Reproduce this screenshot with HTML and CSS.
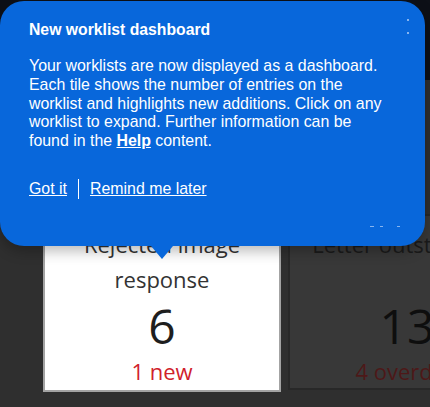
FILE: index.html
```html
<!DOCTYPE html>
<html lang="en">
<head>
<meta charset="utf-8">
<title>Worklist dashboard</title>
<link rel="stylesheet" href="styles.css">
</head>
<body>
<header class="topbar"></header>
<main class="dash">
  <div class="tiles">
    <section class="tile tile-active">
      <h2 class="tile-title">Rejected image response</h2>
      <div class="tile-count">6</div>
      <div class="tile-note">1 new</div>
    </section>
    <section class="tile tile-dim">
      <h2 class="tile-title">Letter outstanding</h2>
      <div class="tile-count">13</div>
      <div class="tile-note">4 overdue</div>
    </section>
  </div>
</main>
<div class="popup" role="dialog" aria-labelledby="popup-title">
  <h1 class="popup-title" id="popup-title">New worklist dashboard</h1>
  <p class="popup-text">Your worklists are now displayed as a dashboard. Each tile shows the number of entries on the worklist and highlights new additions. Click on any worklist to expand. Further information can be found in the <a class="help-link" href="#">Help</a> content.</p>
  <div class="popup-actions">
    <a class="action" href="#">Got it</a>
    <span class="divider"></span>
    <a class="action" href="#">Remind me later</a>
  </div>
  <span class="dot dot-a"></span>
  <span class="dot dot-b"></span>
  <span class="dot dot-c"></span>
  <span class="dot dot-d"></span>
  <span class="dot dot-e"></span>
</div>
</body>
</html>
```
FILE: styles.css
```css
html, body {
  margin: 0;
  padding: 0;
}

body {
  width: 430px;
  height: 407px;
  overflow: hidden;
  background: #2f2f2f;
  position: relative;
  font-family: "Open Sans", "Noto Sans", sans-serif;
}

.topbar {
  height: 80px;
  background: #0d1017;
}

.dash {
  padding: 134px 0 0 43px;
}

.tiles {
  display: flex;
  gap: 7px;
}

.tile {
  flex: 0 0 238px;
  box-sizing: border-box;
  height: 178px;
  padding-top: 11px;
  display: flex;
  flex-direction: column;
  align-items: center;
  text-align: center;
}

.tile-active {
  background: #ffffff;
  border: 2px solid #a3a3a3;
  color: #333333;
}

.tile-dim {
  background: #383838;
  border: 2px solid #282828;
  color: #1a1a1a;
  height: 176px;
}

.tile-title {
  margin: 0;
  font-size: 22px;
  font-weight: 400;
  line-height: 35px;
  min-height: 70px;
  padding: 0 6px;
}

.tile-count {
  margin-top: 0.5px;
  font-size: 48px;
  line-height: 56px;
  color: #1e1e1e;
}

.tile-dim .tile-count {
  color: #0e0e0e;
}

.tile-note {
  margin-top: 1px;
  font-size: 22px;
  line-height: 32px;
  color: #d0212b;
}

.tile-dim .tile-note {
  color: #4d1818;
}

.popup {
  position: absolute;
  left: 0;
  top: 1px;
  width: 425px;
  height: 245px;
  box-sizing: border-box;
  padding: 19.5px 20px 0 29px;
  background: #0867db;
  border-radius: 24px;
  box-shadow: 0 5px 14px rgba(0, 0, 0, 0.28);
  color: #ffffff;
  font-family: "Liberation Sans", Arial, sans-serif;
  font-size: 15.9px;
}

.popup::after {
  content: "";
  position: absolute;
  left: 151px;
  top: 100%;
  border-left: 11px solid transparent;
  border-right: 11px solid transparent;
  border-top: 13px solid #0867db;
}

.popup-title {
  margin: 0;
  font-size: 15.75px;
  font-weight: 700;
  line-height: 18px;
}

.popup-text {
  margin: 18.6px 0 0;
  max-width: 358px;
  line-height: 18.75px;
}

.help-link {
  color: #ffffff;
  font-weight: 700;
  text-decoration: underline;
}

.popup-actions {
  margin-top: 28px;
  height: 20px;
  display: flex;
  align-items: center;
  line-height: 18px;
}

.action {
  color: #ffffff;
  text-decoration: underline;
}

.divider {
  width: 0;
  height: 20px;
  border-left: 1px solid #ffffff;
  margin: 0 11px;
}

.dot {
  position: absolute;
  width: 2px;
  height: 2px;
  background: rgba(190, 215, 250, 0.7);
}

.dot-a { left: 407px; top: 18px; }
.dot-b { left: 407px; top: 31px; }
.dot-c { left: 370px; top: 225px; width: 4px; height: 1px; }
.dot-d { left: 380px; top: 225px; width: 3px; height: 1px; }
.dot-e { left: 397px; top: 225px; width: 3px; height: 1px; }
```
